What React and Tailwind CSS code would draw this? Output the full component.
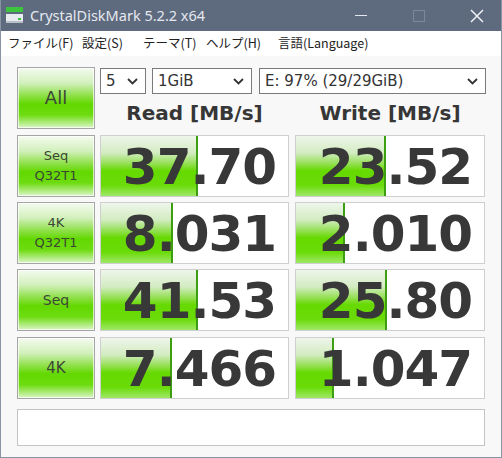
import React from "react";

const rows = [
  { label: ["Seq", "Q32T1"], read: "37.70", rw: 97, write: "23.52", ww: 90 },
  { label: ["4K", "Q32T1"], read: "8.031", rw: 72, write: "2.010", ww: 49 },
  { label: ["Seq"], read: "41.53", rw: 97, write: "25.80", ww: 91 },
  { label: ["4K"], read: "7.466", rw: 71, write: "1.047", ww: 38 },
];

const greenBtn =
  "bg-[linear-gradient(to_bottom,#f4fbef_0%,#d2f0bc_25%,#8ee048_46%,#62d800_60%,#6ddc10_78%,#b3ec85_92%,#dcf6c8_100%)]";
const greenBar =
  "bg-[linear-gradient(to_bottom,#eef5ea_0%,#d3ecc2_28%,#94e054_46%,#66d900_58%,#6adb08_82%,#9fe867_100%)]";

const Chevron = () => (
  <svg width="11" height="7" viewBox="0 0 11 7" className="shrink-0">
    <polyline points="1,1 5.5,5.5 10,1" fill="none" stroke="#333" strokeWidth="1.8" />
  </svg>
);

const Select = ({ value, className }) => (
  <div
    className={`h-[26px] bg-white border border-[#7a7a7a] flex items-center justify-between pl-[5px] pr-[7px] text-[15px] text-[#333] ${className}`}
  >
    <span>{value}</span>
    <Chevron />
  </div>
);

const Cell = ({ value, width, className }) => (
  <div className={`relative h-[62px] bg-white border border-[#cfcfcf] ${className}`}>
    <div
      className={`absolute left-0 top-0 bottom-0 ${greenBar} border-r-2 border-[#3e9e12]`}
      style={{ width }}
    />
    <div className="relative h-full flex items-center justify-end pr-[12px] pt-[1px] font-bold text-[50px] tracking-[-1px] text-[#383838] leading-none">
      {value}
    </div>
  </div>
);

const LabelBtn = ({ children, className }) => (
  <div
    className={`w-[78px] h-[62px] border border-[#a5a5a5] ${greenBtn} flex flex-col items-center justify-center text-[#3b4734] leading-[20px] shadow-[inset_0_0_0_1px_rgba(255,255,255,0.7)] ${className}`}
  >
    {children}
  </div>
);

export default function App() {
  return (
    <div
      className="w-[502px] h-[458px] flex flex-col border-x border-b border-[#8893a3] overflow-hidden"
      style={{ fontFamily: '"DejaVu Sans", Verdana, sans-serif' }}
    >
      {/* title bar */}
      <div className="h-[31px] shrink-0 bg-[#5e6a7e] flex items-center pl-[5px] relative">
        <svg width="18" height="17" viewBox="0 0 18 17">
          <rect x="0" y="0" width="17" height="5" fill="#3cc43c" />
          <rect x="0" y="7" width="17" height="9" fill="#e9ecef" />
          <rect x="0" y="14" width="17" height="2" fill="#b9c0c8" />
          <rect x="12" y="11" width="3" height="2" fill="#3cc43c" />
        </svg>
        <span
          className="ml-[6px] text-[14.5px] text-[#e4e8ee]"
          style={{ fontFamily: '"Noto Sans", sans-serif' }}
        >
          CrystalDiskMark 5.2.2 x64
        </span>
        <div className="ml-auto flex items-center h-full">
          <div className="w-[46px] flex justify-center">
            <div className="w-[12px] h-[1px] bg-[#e4e8ee]" />
          </div>
          <div className="w-[12px]" />
          <div className="w-[46px] flex justify-center">
            <div className="w-[12px] h-[12px] border border-[#7b879a]" />
          </div>
          <div className="w-[12px]" />
          <div className="w-[46px] flex justify-center mr-[1px]">
            <svg width="14" height="14" viewBox="0 0 14 14">
              <path d="M1 1 L13 13 M13 1 L1 13" stroke="#eef1f5" strokeWidth="1.5" />
            </svg>
          </div>
        </div>
      </div>

      {/* menu bar */}
      <div
        className="h-[25px] shrink-0 bg-white flex items-center text-[12.5px] text-[#222] pl-[7px]"
        style={{ fontFamily: '"Noto Sans CJK JP", "Noto Sans", sans-serif' }}
      >
        <span className="w-[74px]">ファイル(F)</span>
        <span className="w-[61px]">設定(S)</span>
        <span className="w-[63px]">テーマ(T)</span>
        <span className="w-[72px]">ヘルプ(H)</span>
        <span>言語(Language)</span>
      </div>

      {/* content */}
      <div className="flex-1 bg-[#f8f8f8] pl-[16px] pt-[11px] flex flex-col">
        <div className="flex">
          <LabelBtn className="text-[18px]">All</LabelBtn>
          <div className="ml-[5px] flex flex-col">
            <div className="flex mt-[1px]">
              <Select value="5" className="w-[46px]" />
              <Select value="1GiB" className="w-[100px] ml-[6px]" />
              <Select value="E: 97% (29/29GiB)" className="w-[227px] ml-[7px]" />
            </div>
            <div className="flex h-[35px] items-center font-bold text-[20px] text-[#363636]">
              <div className="w-[189px] text-center pt-[2px]">Read [MB/s]</div>
              <div className="w-[190px] ml-[6px] text-center pt-[2px]">Write [MB/s]</div>
            </div>
          </div>
        </div>

        {rows.map((r, i) => (
          <div key={i} className={`flex ${i === 0 ? "mt-[6px]" : i === 3 ? "mt-[6px]" : "mt-[5px]"}`}>
            <LabelBtn className={r.label.length > 1 ? "text-[13px]" : r.label[0] === "Seq" ? "text-[14px]" : "text-[15px]"}>
              {r.label.map((t) => (
                <span key={t}>{t}</span>
              ))}
            </LabelBtn>
            <Cell value={r.read} width={r.rw} className="w-[189px] ml-[5px]" />
            <Cell value={r.write} width={r.ww} className="w-[190px] ml-[6px]" />
          </div>
        ))}

        <div className="mt-[10px] w-[468px] h-[37px] bg-white border border-[#c4c4c4]" />
      </div>
    </div>
  );
}
